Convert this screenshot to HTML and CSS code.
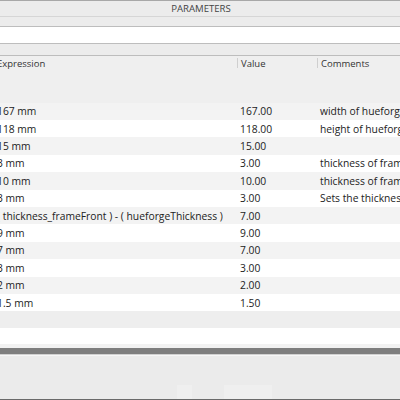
FILE: index.html
```html
<!DOCTYPE html>
<html>
<head>
<meta charset="utf-8">
<link rel="stylesheet" href="styles.css">
</head>
<body>
<div class="panel">
  <div class="titlebar">PARAMETERS</div>
  <div class="band"></div>
  <div class="search"></div>
  <div class="band2"></div>
  <div class="table">
    <div class="head">
      <div class="hcell c1">Expression</div>
      <div class="hcell c2"><span class="sep"></span>Value</div>
      <div class="hcell c3"><span class="sep"></span>Comments</div>
    </div>
    <div class="rows">
      <div class="row"><div class="c1">167 mm</div><div class="c2">167.00</div><div class="c3">width of hueforge</div></div>
      <div class="row"><div class="c1">118 mm</div><div class="c2">118.00</div><div class="c3">height of hueforge</div></div>
      <div class="row"><div class="c1">15 mm</div><div class="c2">15.00</div><div class="c3"></div></div>
      <div class="row"><div class="c1">3 mm</div><div class="c2">3.00</div><div class="c3">thickness of frame</div></div>
      <div class="row"><div class="c1">10 mm</div><div class="c2">10.00</div><div class="c3">thickness of frame</div></div>
      <div class="row"><div class="c1">3 mm</div><div class="c2">3.00</div><div class="c3">Sets the thickness</div></div>
      <div class="row"><div class="c1">( thickness_frameFront ) - ( hueforgeThickness )</div><div class="c2">7.00</div><div class="c3"></div></div>
      <div class="row"><div class="c1">9 mm</div><div class="c2">9.00</div><div class="c3"></div></div>
      <div class="row"><div class="c1">7 mm</div><div class="c2">7.00</div><div class="c3"></div></div>
      <div class="row"><div class="c1">3 mm</div><div class="c2">3.00</div><div class="c3"></div></div>
      <div class="row"><div class="c1">2 mm</div><div class="c2">2.00</div><div class="c3"></div></div>
      <div class="row"><div class="c1">1.5 mm</div><div class="c2">1.50</div><div class="c3"></div></div>
    </div>
  </div>
  <div class="after"></div>
  <div class="whitebar"></div>
  <div class="lightbar"></div>
  <div class="darkbar"></div>
  <div class="hilite"></div>
  <div class="footer">
    <div class="fbtn b1"></div>
    <div class="fbtn b2"></div>
  </div>
</div>
</body>
</html>
```

FILE: styles.css
```css
html, body {
  margin: 0;
  padding: 0;
  background: #ebebeb;
}
.panel {
  width: 400px;
  height: 400px;
  overflow: hidden;
  display: flex;
  flex-direction: column;
  font-family: "Open Sans", "Noto Sans", sans-serif;
  color: #222;
}
.titlebar {
  height: 15px;
  flex: none;
  border-top: 1px solid #a8a8a8;
  border-bottom: 1px solid #d6d6d6;
  background: #ececec;
  text-align: center;
  font-size: 9.6px;
  line-height: 15px;
  color: #444;
  padding-left: 2px;
}
.band {
  height: 9px;
  flex: none;
  background: #ececec;
  border-bottom: 1px solid #bdbdbd;
}
.search {
  height: 16px;
  flex: none;
  background: #ffffff;
  border-bottom: 1px solid #bdbdbd;
}
.band2 {
  height: 11px;
  flex: none;
  background: #ececec;
  border-bottom: 1px solid #bdbdbd;
}
.table {
  flex: none;
  margin-left: -3px;
  font-size: 10.3px;
}
.head {
  height: 46.6px;
  background: #efefef;
  display: grid;
  grid-template-columns: 240px 80px 1fr;
  color: #333;
  font-size: 9.5px;
}
.hcell {
  position: relative;
  padding-top: 1px;
  line-height: 13px;
  white-space: nowrap;
}
.hcell.c2, .hcell.c3 {
  padding-left: 4px;
}
.sep {
  position: absolute;
  left: 0;
  top: 2px;
  width: 1px;
  height: 10px;
  background: #cfcfcf;
}
.row {
  height: 17.4px;
  display: grid;
  grid-template-columns: 240px 80px 1fr;
  align-items: center;
  white-space: nowrap;
  overflow: hidden;
  background: #f3f3f3;
}
.row:nth-child(even) {
  background: #ffffff;
}
.row .c2, .row .c3 {
  padding-left: 3px;
}
.after {
  height: 16.6px;
  flex: none;
  background: #eeeeee;
}
.whitebar {
  height: 16px;
  flex: none;
  background: #ffffff;
}
.lightbar {
  height: 4px;
  flex: none;
  background: #f2f2f2;
}
.darkbar {
  height: 6px;
  flex: none;
  background: #7e7e7e;
}
.hilite {
  height: 1px;
  flex: none;
  background: #f6f6f6;
  border-top: 1px solid #d0d0d0;
}
.footer {
  flex: 1;
  background: #ebebeb;
  border-bottom: 1px solid #6a6a6a;
  display: flex;
  align-items: flex-end;
  padding-left: 177px;
  gap: 32px;
}
.fbtn {
  height: 14px;
  background: #efefef;
}
.b1 { width: 15px; }
.b2 { width: 48px; }
```
